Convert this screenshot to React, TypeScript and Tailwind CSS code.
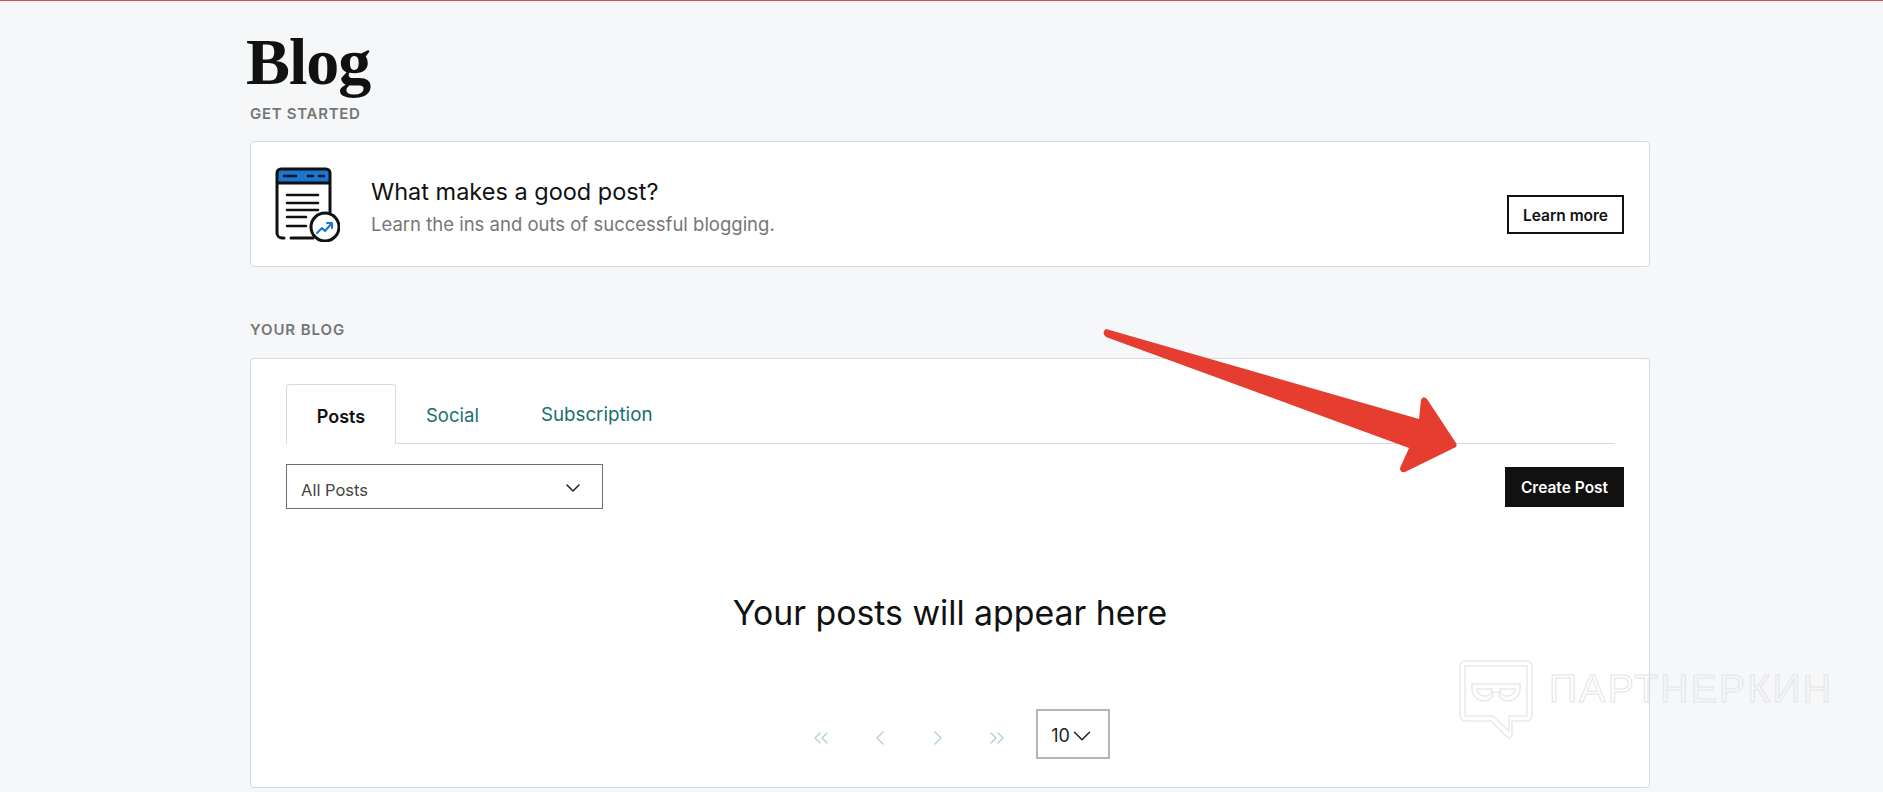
import { ChevronDown, ChevronLeft, ChevronRight, ChevronsLeft, ChevronsRight } from 'lucide-react';

function PostIcon() {
  return (
    <svg width="65" height="75" viewBox="0 0 65 75" fill="none" className="shrink-0">
      <path d="M2 17V6a4 4 0 0 1 4-4h45a4 4 0 0 1 4 4v11z" fill="#1976d2" />
      <g stroke="#111" strokeWidth="3" strokeLinecap="round">
        <path d="M2 17V6a4 4 0 0 1 4-4h45a4 4 0 0 1 4 4v39M2 16h53M2 17v49a5 5 0 0 0 5 5h2M16 71h22" />
        <path d="M9 9h12M33 9h5M44 9h5" strokeWidth="2.5" />
        <path d="M12 28h31M12 36h31M12 43h31M12 50h19M12 59h19" strokeWidth="2.5" />
        <circle cx="50" cy="60" r="14" fill="#fff" />
      </g>
      <path d="M42 66l5-5 3 3 7-8M52 56h5v5" stroke="#1976d2" strokeWidth="2" strokeLinecap="round" strokeLinejoin="round" />
    </svg>
  );
}

function Watermark() {
  return (
    <div className="absolute left-[1459px] top-[659px] flex items-center gap-[16px] pointer-events-none">
      <svg width="74" height="80" viewBox="0 0 74 80" fill="none" stroke="#e8e9eb" strokeWidth="1.5">
        <path d="M6 1h62a5 5 0 0 1 5 5v50a5 5 0 0 1-5 5H53v14a3 3 0 0 1-5 2L32 61H6a5 5 0 0 1-5-5V6a5 5 0 0 1 5-5z" />
        <path d="M6 6h62v50H50v15L34 56H6z" />
        <path d="M13 24h48v5a12 12 0 0 1-12 12h-1a8 8 0 0 1-8-9h-6a8 8 0 0 1-8 9h-1a12 12 0 0 1-12-12z" />
        <path d="M18 29a7 7 0 0 0 7 7h3a7 7 0 0 0 5-7zM41 29a7 7 0 0 0 5 7h3a7 7 0 0 0 7-7z" />
      </svg>
      <span className="font-['Liberation_Sans',sans-serif] text-[39px] leading-none text-transparent tracking-[2.3px] [-webkit-text-stroke:1px_#e4e5e8] -mt-[24px]">
        ПАРТНЕРКИН
      </span>
    </div>
  );
}

function Arrow() {
  return (
    <svg
      className="absolute left-0 top-0 pointer-events-none"
      width="1883"
      height="792"
      fill="none"
    >
      <path
        d="M1106 328L1419 418L1421 399Q1423 394 1427 398L1456 442Q1458 446 1454 447L1405 471Q1400 472 1400 467L1409 447L1106 336Q1101 331 1106 328Z"
        fill="#e53e30"
      />
    </svg>
  );
}

export default function App() {
  return (
    <div className="relative h-[792px] overflow-hidden bg-[#f5f7f8] border-t border-[#c9545c] font-['Inter',sans-serif] text-[#111]">
      <div className="ml-[250px] w-[1400px] pt-[25px]">
        <h1 className="-ml-[4px] font-['Liberation_Serif',serif] font-bold text-[66px] leading-[72px] tracking-[-1px] text-[#111]">
          Blog
        </h1>
        <p className="mt-[7px] text-[15px] leading-[18px] font-semibold tracking-[0.7px] text-[#767676]">GET STARTED</p>

        <div className="mt-[18px] h-[126px] bg-white border border-[#d4dbe0] rounded flex items-center pl-[24px] pr-[25px]">
          <PostIcon />
          <div className="ml-[31px] flex-1 pt-[5px]">
            <p className="text-[23.5px] leading-[30px]">What makes a good post?</p>
            <p className="mt-[5px] text-[18.5px] leading-[24px] text-[#767676]">Learn the ins and outs of successful blogging.</p>
          </div>
          <button className="mt-[20px] w-[117px] h-[39px] pt-[3px] border-2 border-[#111] text-[15.5px] font-semibold">Learn more</button>
        </div>

        <p className="mt-[54px] text-[15px] leading-[18px] font-semibold tracking-[0.9px] text-[#767676]">YOUR BLOG</p>

        <div className="mt-[19px] h-[430px] bg-white border border-[#d4dbe0] rounded px-[35px] pt-[25px]">
          <div className="flex h-[60px] border-b border-[#d4dbe0]">
            <div className="w-[110px] h-[60px] pt-[4px] bg-white border border-b-0 border-[#d4dbe0] rounded-t flex items-center justify-center text-[18px] font-semibold">
              Posts
            </div>
            <div className="pt-[4px] px-[30px] flex items-center text-[18.5px] text-[#1b6e74]">Social</div>
            <div className="pt-[4px] px-[32px] flex items-center text-[18.75px] text-[#1b6e74]">Subscription</div>
          </div>

          <div className="mt-[20px] flex items-start justify-between -mr-[10px]">
            <div className="w-[317px] h-[45px] border border-[#6f6f6f] flex items-center justify-between pl-[14px] pr-[17px] pt-[2px] text-[16.5px] text-[#444]">
              <span className="mt-[5px]">All Posts</span>
              <ChevronDown className="w-[24px] h-[24px] text-[#222]" strokeWidth={1.5} />
            </div>
            <button className="mt-[3px] w-[119px] h-[40px] pt-[2px] bg-[#111] text-white text-[15.5px] font-semibold">Create Post</button>
          </div>

          <h2 className="mt-[84px] text-center text-[33.8px] leading-[40px] text-[#111]">Your posts will appear here</h2>

          <div className="mt-[76px] flex items-center justify-center pl-[18px]">
            <ChevronsLeft className="mt-[7px] w-[24px] h-[24px] text-[#a9cfd0]" strokeWidth={1.25} />
            <ChevronLeft className="mt-[7px] ml-[35px] w-[24px] h-[24px] text-[#a9cfd0]" strokeWidth={1.25} />
            <ChevronRight className="mt-[7px] ml-[34px] w-[24px] h-[24px] text-[#a9cfd0]" strokeWidth={1.25} />
            <ChevronsRight className="mt-[7px] ml-[35px] w-[24px] h-[24px] text-[#a9cfd0]" strokeWidth={1.25} />
            <div className="ml-[27px] w-[74px] h-[50px] pt-[3px] border-2 border-[#b5b5b5] flex items-center justify-center text-[18px] text-[#222]">
              10
              <ChevronDown className="-mx-[3px] w-[30px] h-[30px]" strokeWidth={1.25} />
            </div>
          </div>
        </div>
      </div>
      <Arrow />
      <Watermark />
    </div>
  );
}
